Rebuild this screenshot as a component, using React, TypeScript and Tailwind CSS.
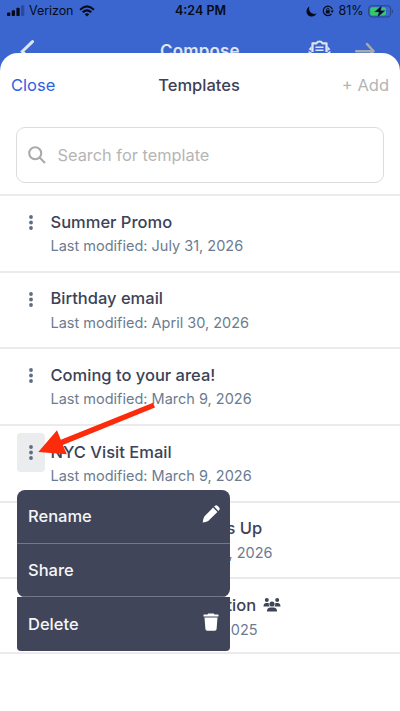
import React from "react";

type Template = { title: string; date: string; selected?: boolean; covered?: boolean; shared?: boolean };

const templates: Template[] = [
  { title: "Summer Promo", date: "Last modified: July 31, 2026" },
  { title: "Birthday email", date: "Last modified: April 30, 2026" },
  { title: "Coming to your area!", date: "Last modified: March 9, 2026" },
  { title: "NYC Visit Email", date: "Last modified: March 9, 2026", selected: true },
  { title: "s Up", date: ", 2026", covered: true },
  { title: "tion", date: "2025", covered: true, shared: true },
];

function StatusBar() {
  return (
    <div className="flex h-[22px] items-center text-[13px] leading-[22px] text-[#060b18]">
      <svg className="ml-[7px] shrink-0" width="18" height="12" viewBox="0 0 18 12" fill="currentColor">
        <rect x="0" y="7.4" width="3.3" height="3.6" rx=".8" />
        <rect x="4.7" y="5.3" width="3.3" height="5.7" rx=".8" />
        <rect x="9.4" y="2.8" width="3.3" height="8.2" rx=".8" />
        <rect x="14" y="0.2" width="3.3" height="10.8" rx=".8" opacity=".3" />
      </svg>
      <span className="ml-[4px] w-[45px] shrink-0 whitespace-nowrap text-[12.5px] tracking-[-0.05px]">Verizon</span>
      <svg className="ml-[5px] shrink-0" width="16" height="12" viewBox="0 0 16 12" fill="none" stroke="currentColor">
        <path d="M1.1 4.7 Q8 -1.9 14.9 4.7" strokeWidth="2.1" />
        <path d="M3.7 7.3 Q8 3.4 12.3 7.3" strokeWidth="2.1" />
        <path d="M5.7 9.2 Q8 7.4 10.3 9.2 L8 11.6 Z" fill="currentColor" stroke="none" />
      </svg>
      <span className="ml-[80px] w-[51px] shrink-0 whitespace-nowrap text-[12.5px] font-semibold">4:24 PM</span>
      <svg className="ml-[80px] shrink-0" width="11" height="11" viewBox="0 0 11 11" fill="currentColor">
        <path d="M3.4 .5 C1.4 1.6 .4 3.5.5 5.7 C.7 8.5 3 10.6 5.7 10.6 C7.8 10.6 9.7 9.5 10.4 7.6 C6.1 9 1.900 5.4 3.4.5Z" />
      </svg>
      <svg className="ml-[5px] shrink-0" width="12" height="12" viewBox="0 0 12 12" fill="none" stroke="currentColor">
        <path d="M9.500 9 A4.7 4.7 0 1 1 10.4 4.3" strokeWidth="1.2" />
        <path d="M8.5 5.5h3.4L10.2 8Z" fill="currentColor" stroke="none" />
        <rect x="3.8" y="5.3" width="3.9" height="3.1" rx=".4" fill="currentColor" stroke="none" />
        <path d="M4.7 5.5V4.3a1.1 1.1 0 0 1 2.2 0v1.2" strokeWidth=".9" />
      </svg>
      <span className="ml-[4.5px] w-[25.5px] shrink-0 whitespace-nowrap text-[12.5px]">81%</span>
      <svg className="ml-[4px] shrink-0" width="26" height="13" viewBox="0 0 26 13">
        <rect x=".7" y=".7" width="22" height="11.3" rx="3.6" fill="none" stroke="#294584" strokeWidth="1.1" />
        <rect x="2.2" y="2.2" width="15.8" height="8.3" rx="2.2" fill="#35ca62" />
        <path d="M24 4.5c1.5.6 1.5 3 0 3.7Z" fill="#294584" />
        <path d="M13.9 .3 6.5 7h4.4L9.3 12.6 17.300 5.500h-4.600Z" fill="#060b18" stroke="#3b66d0" strokeWidth=".4" />
      </svg>
    </div>
  );
}

function ComposeHeader() {
  return (
    <div className="flex h-[31px] items-start text-[#dfe4ed]">
      <svg className="ml-[20px] mt-[17px] shrink-0" width="15" height="24" viewBox="0 0 15 24" fill="none" stroke="currentColor" strokeWidth="3" strokeLinecap="round">
        <path d="M12.5 2.6 2.300 12.500l10.200 10" />
      </svg>
      <span className="ml-[125px] mt-[17px] w-[81px] shrink-0 whitespace-nowrap text-[17px] font-semibold leading-6 tracking-[0.15px]">Compose</span>
      <svg className="ml-[67px] mt-[18px] shrink-0" width="23" height="22" viewBox="0 0 23 22">
        <path d="M4.500 12V3.300h4Q9.500 1.500 11.500 1.500t3 1.800h4V12" fill="none" stroke="currentColor" strokeWidth="2.200" strokeLinejoin="round" />
        <path d="M3.600 6 .6 9.200 3.600 11ZM19.400 6l3 3.200-3 1.800ZM.6 10.800l4 2.400h13.800l4-2.400V21H.6Z" fill="currentColor" />
        <path d="M7.500 7.300h8M7.500 10.300h8" stroke="currentColor" strokeWidth="1.500" />
      </svg>
      <svg className="ml-[24px] mt-[20px] shrink-0" width="20" height="18" viewBox="0 0 20 18" fill="none" stroke="#a5a9b1" strokeWidth="2.5" strokeLinecap="round">
        <path d="M1.2 9.2H18M12 2 18.4 9.2l-6.4 7" />
      </svg>
    </div>
  );
}

function Dots() {
  return (
    <svg width="4" height="15" viewBox="0 0 4 15" fill="#5d6e83">
      <circle cx="2" cy="2" r="1.9" />
      <circle cx="2" cy="7.5" r="1.9" />
      <circle cx="2" cy="13" r="1.9" />
    </svg>
  );
}

function People() {
  return (
    <svg className="ml-[6.5px]" width="18" height="14" viewBox="0 0 17 14" fill="#3f4459">
      <circle cx="3.3" cy="2" r="2" />
      <circle cx="13.7" cy="2" r="2" />
      <circle cx="8.5" cy="6" r="2.6" />
      <path d="M0 8.5C0 6.2 1 5 2.7 5h1.6q.6 0 1.1.3Q4.9 7 6 8.5ZM17 8.5C17 6.2 16 5 14.3 5h-1.6q-.6 0-1.1.3.5 1.7-.6 3.2ZM3.4 13.6C3.4 11 4.8 9.6 7 9.6h3c2.2 0 3.6 1.4 3.6 4Z" />
    </svg>
  );
}

function TemplateRow({ t }: { t: Template }) {
  return (
    <div className={"flex shrink-0 items-start border-b-2 border-[#ebebed] pl-[17px] " + (t.shared ? "h-[74.5px]" : "h-[76.7px]")}>
      <div className={"mt-[7px] flex h-[39px] w-7 shrink-0 items-center justify-center rounded-[4px] " + (t.selected ? "bg-[#ebecee]" : "")}>
        <Dots />
      </div>
      <div className={"pt-[13.5px] " + (t.covered ? "ml-[181.5px]" : "ml-[5.5px]")}>
        <div className="flex h-6 items-center whitespace-nowrap text-[16.5px] font-medium leading-6 text-[#3c4257]">
          <span>{t.title}</span>
          {t.shared && <People />}
        </div>
        <div className={"h-6 whitespace-nowrap pt-[0.6px] text-[14.5px] leading-6 text-[#6c7c90] " + (t.shared ? "-ml-[4.5px]" : t.covered ? "ml-[2px]" : "")}>{t.date}</div>
      </div>
    </div>
  );
}

function ContextMenu() {
  return (
    <div className="absolute left-[17px] top-[490px] w-[213px] text-[16.5px] font-medium text-[#f5f6f9]">
      <div className="overflow-hidden rounded-[8px] bg-[#404559]">
        <div className="flex h-[53.5px] items-center justify-between border-b border-[#747887] pl-[11px] pr-[10px]">
          <span>Rename</span>
          <svg className="-mt-[5px]" width="18" height="18" viewBox="0 0 18 18" fill="white">
            <path d="M11.1 2.6 15.4 6.9 6.2 16Q4 17.2.7 17.6 1 14 2.3 11.5ZM12.1 1.6 13 .8Q14.3-.2 15.7.9l1.5 1.5q1 1.3 0 2.6l-.8.9Z" />
          </svg>
        </div>
        <div className="flex h-[53.5px] items-center border-b border-[#747887] pl-[11px] pt-px">Share</div>
      </div>
      <div className="flex h-[54px] items-center justify-between rounded-b-[4px] bg-[#404559] pl-[11px] pr-[11px]">
        <span>Delete</span>
        <svg className="-mt-[4px]" width="16" height="18" viewBox="0 0 16 18" fill="white">
          <path d="M5.2 .5h5.6l.7.9h3.6q.4 0 .4.4v1.7H.5V1.8q0-.4.4-.4h3.6ZM1.500 4.500h13L13.600 16q-.2 1.700-1.800 1.700H4.200Q2.600 17.700 2.400 16Z" />
        </svg>
      </div>
    </div>
  );
}

export default function App() {
  return (
    <div className="relative flex h-[711px] w-[400px] flex-col overflow-hidden bg-[#3b66d0] font-['Inter','Liberation_Sans',sans-serif]">
      <StatusBar />
      <ComposeHeader />
      <main className="relative flex flex-1 flex-col rounded-t-[18px] bg-white">
        <div className="grid h-[64px] shrink-0 grid-cols-3 items-center px-[11px] text-[16.5px]">
          <span className="text-[#2e62e5]">Close</span>
          <span className="-ml-[2px] text-center font-medium text-[#3c4257]">Templates</span>
          <span className="text-right text-[#b4b4b4]">+ Add</span>
        </div>
        <div className="mx-4 mt-[10px] flex h-[56px] shrink-0 items-center rounded-[9px] border border-[#dcdcdc] pl-[11px] text-[16.35px] text-[#b5b5b5]">
          <svg width="18" height="18" viewBox="0 0 18 18" fill="none" stroke="#aaaaaa" strokeWidth="2.1">
            <circle cx="7.2" cy="7.2" r="6" />
            <path d="m11.6 11.6 5.4 5.4" />
          </svg>
          <span className="ml-[11.5px] whitespace-nowrap">Search for template</span>
        </div>
        <div className="mt-[11px] border-t-2 border-[#ebebed]">
          {templates.map((t) => <TemplateRow key={t.title} t={t} />)}
        </div>
      </main>
      <ContextMenu />
      <svg className="absolute left-0 top-[390px]" width="180" height="80" viewBox="0 390 180 80" fill="#fb2b0b">
        <path d="m38.3 452 18.7-21.7 3.8 9.5L153 402.8l2 4.8-92.2 37.4 4 9.3Z" />
      </svg>
    </div>
  );
}
